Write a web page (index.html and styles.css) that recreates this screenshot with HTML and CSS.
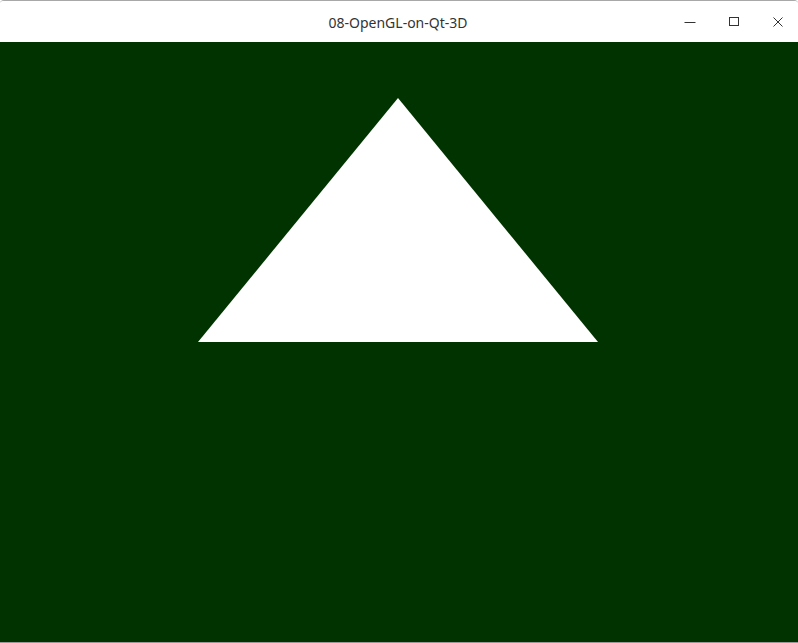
FILE: index.html
```html
<!DOCTYPE html>
<html>
<head>
<meta charset="utf-8">
<title>08-OpenGL-on-Qt-3D</title>
<link rel="stylesheet" href="styles.css">
</head>
<body>
<div class="window">
  <header class="titlebar">
    <div class="title">08-OpenGL-on-Qt-3D</div>
    <div class="controls">
      <span class="ctl">
        <svg width="12" height="12" viewBox="0 0 12 12"><path d="M0.5 6.5h11" stroke="#333" stroke-width="1"/></svg>
      </span>
      <span class="ctl">
        <svg width="12" height="12" viewBox="0 0 12 12"><rect x="1.5" y="1.5" width="9" height="8" fill="none" stroke="#333" stroke-width="1"/></svg>
      </span>
      <span class="ctl">
        <svg width="12" height="12" viewBox="0 0 12 12"><path d="M1.5 1.5l9 9M10.5 1.5l-9 9" stroke="#333" stroke-width="1"/></svg>
      </span>
    </div>
  </header>
  <main class="canvas">
    <svg class="scene" width="798" height="600" viewBox="0 0 798 600">
      <polygon points="198,300 598,300 398,56" fill="#ffffff"/>
    </svg>
  </main>
</div>
</body>
</html>
```

FILE: styles.css
```css
html, body {
  margin: 0;
  padding: 0;
  background: #ffffff;
}
.window {
  width: 798px;
  height: 643px;
  display: flex;
  flex-direction: column;
  box-sizing: border-box;
  border-top: 1px solid #a8a8a8;
  border-bottom: 1px solid #9a9a9a;
  border-radius: 4px 4px 0 0;
  overflow: hidden;
}
.titlebar {
  height: 41px;
  flex: none;
  position: relative;
  display: flex;
  align-items: center;
  justify-content: center;
  background: #ffffff;
}
.title {
  font-family: "Noto Sans", "Open Sans", sans-serif;
  font-size: 14px;
  color: #333333;
  padding-top: 1px;
  padding-right: 2px;
}
.controls {
  position: absolute;
  right: 0;
  top: 0;
  height: 41px;
  display: flex;
  align-items: center;
  padding-right: 14px;
  gap: 32px;
}
.ctl {
  display: flex;
  width: 12px;
  height: 12px;
}
.canvas {
  flex: 1;
  background: #003300;
  overflow: hidden;
}
.scene {
  display: block;
}
```
